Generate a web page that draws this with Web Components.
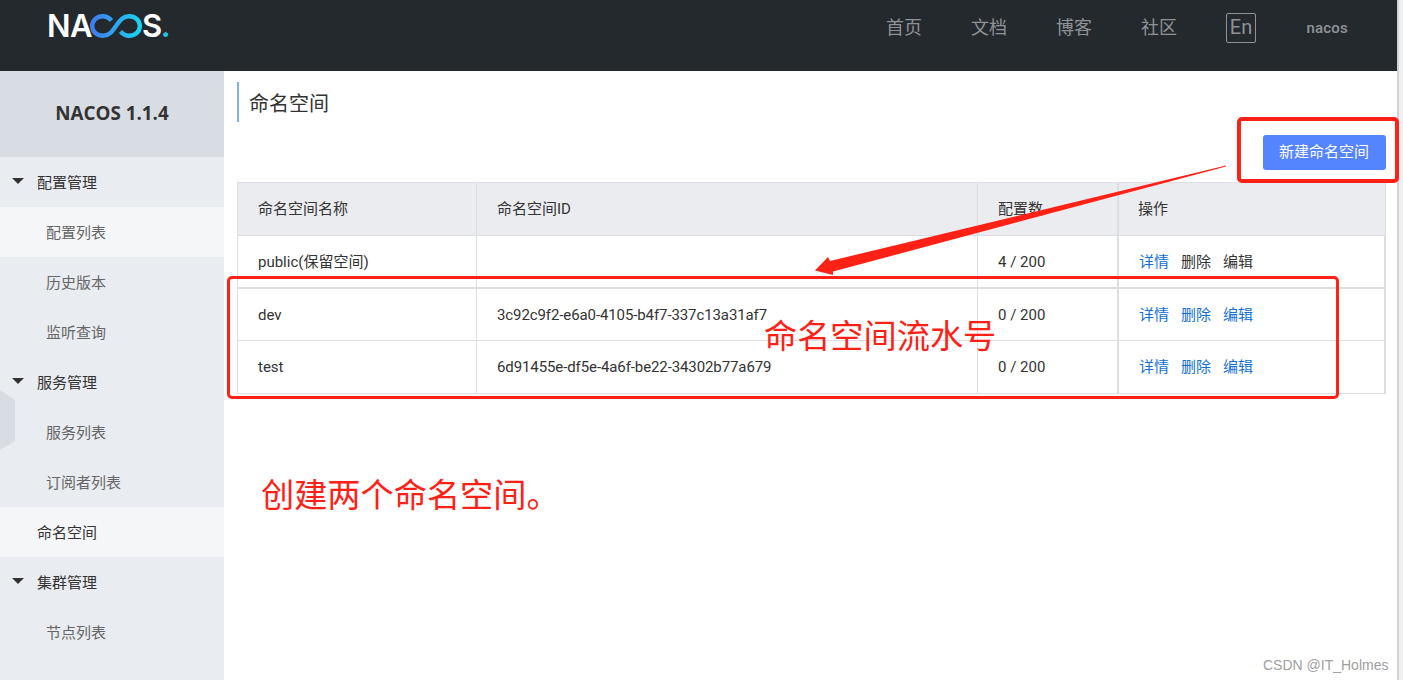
<!DOCTYPE html>
<html><head><meta charset="utf-8">
<style>
html,body{margin:0;padding:0;background:#fff;overflow:hidden}
body{width:1403px;height:680px;font-family:Roboto,"Noto Sans CJK SC",sans-serif;font-size:15px;color:#333}
</style></head><body>
<nacos-app></nacos-app>
<script>
const FONT='Roboto,"Noto Sans CJK SC",sans-serif';
function def(name,html,init){customElements.define(name,class extends HTMLElement{constructor(){super();const r=this.attachShadow({mode:'open'});r.innerHTML=html;}connectedCallback(){if(init)init(this);}});}

def('nacos-logo',`<style>
:host{display:flex;align-items:center;height:28px;margin-top:-4px;color:#fff;font:600 31px/28px Inter,"Open Sans",sans-serif;letter-spacing:-.5px}
svg{display:block;margin:0 0 0 -2px}
.d{color:#1fc6e8;margin-left:-1px}
</style><span>NA</span><svg width="52" height="24" viewBox="0 0 52 24" fill="none"><defs><linearGradient id="g" x1="0" x2="1" y1="0" y2="0"><stop offset="0" stop-color="#3f7cf2"/><stop offset="1" stop-color="#18d4ee"/></linearGradient></defs><path d="M21.500 6.500C18.500 3.200 15.500 2.200 13 2.200 6.500 2.200 2.200 6.500 2.200 12S6.500 21.800 13 21.800C20 21.800 23 16 26 12S32 2.200 39 2.200C45.500 2.200 49.800 6.500 49.800 12S45.500 21.800 39 21.800C36.500 21.800 33.500 20.800 30.500 17.500" stroke="url(#g)" stroke-width="4.400"/></svg><span>S</span><span class="d">.</span>`);

def('nav-bar',`<style>
:host{display:flex;align-items:center;height:71px;background:#24292e;box-sizing:border-box;padding:0 55px 15px 47px}
.sp{flex:1}
nav{display:flex;align-items:center;font:18px/24px ${FONT};color:#8f9397}
a{display:block;width:36px;margin-right:49px;white-space:nowrap}
.en{box-sizing:border-box;width:30px;height:30px;border:1px solid #8f9397;border-radius:2px;font-size:20px;line-height:26px;text-align:center;margin-right:50.500px}
.u{font-size:15px;font-weight:500;color:#8f9397;letter-spacing:.2px}
</style><nacos-logo></nacos-logo><span class="sp"></span><nav><a>首页</a><a>文档</a><a>博客</a><a>社区</a><span class="en">En</span><span class="u">nacos</span></nav>`);

def('side-group',`<style>
:host{display:flex;align-items:center;height:50px;font:15px/20px ${FONT};color:#333;padding:1px 0 0 12px;box-sizing:border-box}
i{width:0;height:0;border-left:6px solid transparent;border-right:6px solid transparent;border-top:6px solid #333;margin-right:13px;margin-top:-4px}
</style><i></i><slot></slot>`);

def('side-item',`<style>
:host{display:flex;align-items:center;height:50px;font:15px/20px ${FONT};color:#666;padding:1px 0 0 46px;box-sizing:border-box}
:host([active]){background:#f4f6f8}
:host([top]){padding-left:37px;color:#333}
</style><slot></slot>`);

def('side-bar',`<style>
:host{display:block;position:relative;width:224px;background:#e9ecf1;height:609px;overflow:hidden;flex:none}
.v{height:86px;box-sizing:border-box;padding-bottom:2px;background:#d8dce3;display:flex;align-items:center;justify-content:center;font:700 18.800px/20px "Open Sans",sans-serif;color:#333}
svg{position:absolute;left:0;top:319px}
.r{position:relative}
</style><div class="v">NACOS 1.1.4</div><svg width="16" height="64" viewBox="0 0 16 64"><path d="M0 0L15 10V51L0 60Z" fill="#d8dce3"/></svg><div class="r"><slot></slot></div>`);

def('page-title',`<style>
:host{display:block;border-left:2px solid #7fb5e3;height:40px;box-sizing:border-box;padding-left:10px;font:20px/44px ${FONT};color:#333}
</style><slot></slot>`);

def('blue-button',`<style>
:host{display:inline-block;box-sizing:border-box;width:123px;height:35px;padding-right:1px;background:#5584ff;border-radius:3px;color:#fff;font:15px/35px ${FONT};text-align:center}
</style><slot></slot>`);

def('ns-table',`<style>
:host{display:grid;grid-template-columns:239px 501px 140px 267px;border:1px solid #dcdee3;border-right-width:2px;width:1149px;box-sizing:border-box;font:15px/20px ${FONT};color:#333}
.c{display:flex;align-items:center;padding-left:20px;box-sizing:border-box;border-right:1px solid #dcdee3;border-bottom:1px solid #dcdee3;white-space:nowrap}
.h{background:#ebecf0;height:53px}
.r1{height:53px;border-bottom-width:2px}
.r2{height:52px}
.r3{height:52px;border-bottom:0}
.c.op{border-right:0;border-left:1px solid #dcdee3;padding-left:19px}
.id{letter-spacing:-.1px}
a{color:#1170d8}
a:first-child{margin-left:1px}
a.dk{color:#333}
a+a{margin-left:12px}
</style>
<div class="c h">命名空间名称</div><div class="c h">命名空间ID</div><div class="c h">配置数</div><div class="c h op">操作</div>
<div class="c r1">public(保留空间)</div><div class="c r1"></div><div class="c r1">4 / 200</div><div class="c r1 op"><a>详情</a><a class="dk">删除</a><a class="dk">编辑</a></div>
<div class="c r2">dev</div><div class="c r2 id">3c92c9f2-e6a0-4105-b4f7-337c13a31af7</div><div class="c r2">0 / 200</div><div class="c r2 op"><a>详情</a><a>删除</a><a>编辑</a></div>
<div class="c r3">test</div><div class="c r3 id">6d91455e-df5e-4a6f-be22-34302b77a679</div><div class="c r3">0 / 200</div><div class="c r3 op"><a>详情</a><a>删除</a><a>编辑</a></div>`);

def('main-panel',`<style>
:host{display:block;flex:1;box-sizing:border-box;padding:11px 0 0 13px;min-width:0}
.b{display:flex;justify-content:flex-end;width:1149px;margin-top:13px;margin-bottom:12px}
</style><page-title>命名空间</page-title><div class="b"><blue-button>新建命名空间</blue-button></div><ns-table></ns-table>`);

def('mark-box',`<style>
:host{position:absolute;box-sizing:border-box;border:3px solid #ff2016;border-radius:5px;display:block}
</style>`);
def('mark-text',`<style>
:host{position:absolute;display:block;color:#ff2016;font:400 33.200px/44px "Noto Sans CJK SC",sans-serif;white-space:nowrap}
</style><slot></slot>`);

def('nacos-app',`<style>
:host{display:block;position:relative;width:1403px;height:680px;overflow:hidden}
.body{display:flex}
.bar{position:absolute;right:0;top:0;width:6px;height:680px;background:#f0f0f0;border-left:2px solid #d2d2d2;box-sizing:border-box}
.wm{position:absolute;left:1263px;top:656px;font:14px/18px "Liberation Sans",sans-serif;color:#a0a0a0;white-space:nowrap}
svg{position:absolute;left:0;top:0}
</style>
<nav-bar></nav-bar>
<div class="body"><side-bar>
<side-group>配置管理</side-group><side-item active>配置列表</side-item><side-item>历史版本</side-item><side-item>监听查询</side-item>
<side-group>服务管理</side-group><side-item>服务列表</side-item><side-item>订阅者列表</side-item><side-item active top>命名空间</side-item>
<side-group>集群管理</side-group><side-item>节点列表</side-item>
</side-bar><main-panel></main-panel></div>
<div class="bar"></div>
<mark-box style="left:1237px;top:117px;width:162px;height:66px;border-width:4px"></mark-box>
<mark-box style="left:227px;top:276px;width:1112px;height:123px"></mark-box>
<svg width="1403" height="680"><path d="M1226 165.500L830 261L828 257L815 270.500L833 275L833 271.500L1226 166.500Z" fill="#ff2016"/></svg>
<mark-text style="left:764px;top:312px">命名空间流水号</mark-text>
<mark-text style="left:261px;top:471px">创建两个命名空间。</mark-text>
<div class="wm">CSDN @IT_Holmes</div>`);
</script></body></html>
